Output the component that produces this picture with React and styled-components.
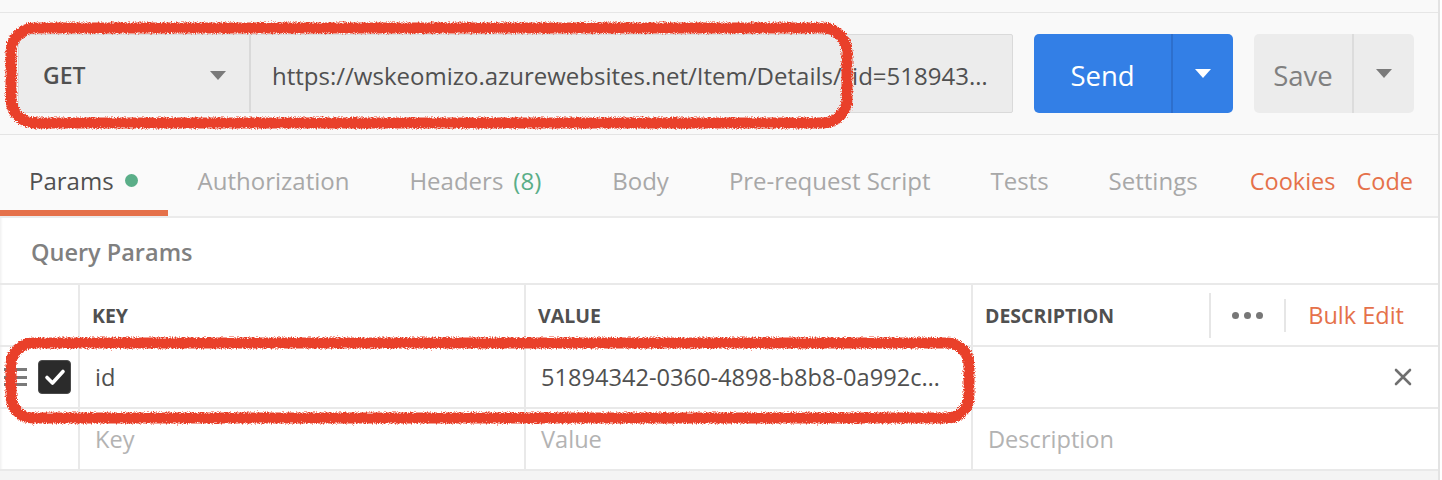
import styled, { createGlobalStyle } from "styled-components";

const GlobalStyle = createGlobalStyle`
  html, body {
    margin: 0;
    padding: 0;
    background: #ffffff;
  }
  body {
    font-family: "Open Sans", "Liberation Sans", sans-serif;
    color: #505050;
  }
  * {
    box-sizing: border-box;
  }
`;

const Page = styled.div`
  position: relative;
  width: 1442px;
  height: 480px;
  overflow: hidden;
  background: #ffffff;
`;

const Pane = styled.div`
  width: 1440px;
  height: 480px;
  display: flex;
  flex-direction: column;
  border-right: 2px solid #e3e3e3;
  box-shadow: inset 3px 0 3px -2px rgba(0, 0, 0, 0.08);
`;

const TopStrip = styled.div`
  height: 13px;
  flex: none;
  background: #f9f9f9;
  border-bottom: 1px solid #e6e6e6;
`;

const RequestBar = styled.div`
  flex: none;
  display: flex;
  align-items: stretch;
  gap: 21px;
  height: 122px;
  padding: 21px 24px 21px 18px;
  background: #f9f9f9;
  border-bottom: 1px solid #e4e4e4;
`;

const UrlGroup = styled.div`
  display: flex;
  width: 995px;
  background: #ececec;
  border: 1px solid #dadada;
  border-radius: 2px;
`;

const MethodSelect = styled.div`
  width: 232px;
  flex: none;
  display: flex;
  align-items: center;
  justify-content: space-between;
  padding: 3px 23px 0 24px;
  border-right: 2px solid #d9d9d9;
  font-size: 23px;
  font-weight: 600;
  color: #505050;
`;

const UrlInput = styled.div`
  flex: 1;
  min-width: 0;
  display: flex;
  align-items: center;
  padding: 3px 22px 0 21px;
  font-size: 24px;
  color: #505050;

  span {
    overflow: hidden;
    white-space: nowrap;
    text-overflow: ellipsis;
  }
`;

const Caret = styled.span`
  width: 0;
  height: 0;
  border-left: 8px solid transparent;
  border-right: 8px solid transparent;
  border-top: 9px solid ${(p) => p.$color || "#7a7a7a"};
`;

const SplitButton = styled.div`
  display: flex;
  width: ${(p) => p.$width}px;
  border-radius: 5px;
  background: ${(p) => (p.$primary ? "#337fe6" : "#ececec")};
  color: ${(p) => (p.$primary ? "#ffffff" : "#808080")};
  font-size: 27.5px;
  font-weight: 500;
`;

const ButtonLabel = styled.div`
  flex: 1;
  display: flex;
  align-items: center;
  justify-content: center;
  padding-top: 3px;
  border-right: 2px solid ${(p) => (p.$primary ? "#2d6fcd" : "#dcdcdc")};
`;

const ButtonCaret = styled.div`
  width: 60px;
  flex: none;
  display: flex;
  align-items: center;
  justify-content: center;
`;

const TabBar = styled.div`
  flex: none;
  display: flex;
  align-items: stretch;
  height: 83px;
  padding-right: 25px;
  background: #fafafa;
  border-bottom: 2px solid #ebebeb;
`;

const Tab = styled.div`
  display: flex;
  align-items: center;
  padding: 10px ${(p) => (p.$wide ? 41 : 30)}px 0 ${(p) => (p.$first ? 29 : 30)}px;
  font-size: 24px;
  color: ${(p) => (p.$active ? "#505050" : "#a8a8a8")};
  box-shadow: ${(p) => (p.$active ? "inset 0 -6px 0 #e5714a" : "none")};
`;

const Dot = styled.span`
  width: 13px;
  height: 13px;
  margin-left: 11px;
  border-radius: 50%;
  background: #5aae88;
`;

const Count = styled.span`
  margin-left: 10px;
  color: #5aae88;
`;

const TabLinks = styled.div`
  margin-left: auto;
  display: flex;
  align-items: center;
  gap: 21px;
  padding-top: 10px;
  font-size: 23.5px;
  color: #e5714a;
`;

const SectionTitle = styled.div`
  flex: none;
  height: 65px;
  display: flex;
  align-items: center;
  padding: 3px 0 0 31px;
  font-size: 23.5px;
  font-weight: 600;
  color: #808080;
`;

const Table = styled.div`
  flex: none;
  border-top: 2px solid #e9e9e9;
`;

const Row = styled.div`
  display: grid;
  grid-template-columns: 80px 446px 447px 1fr;
  height: 62px;
  border-bottom: 2px solid #e9e9e9;
`;

const Cell = styled.div`
  min-width: 0;
  display: flex;
  align-items: center;
  padding: 0 ${(p) => (p.$last ? 26 : 24)}px 0 ${(p) => (p.$head ? 12 : 15)}px;
  border-right: ${(p) => (p.$last ? "none" : "2px solid #e9e9e9")};
  font-size: ${(p) => (p.$head ? 19.5 : 23.6)}px;
  font-weight: ${(p) => (p.$head ? 700 : 400)};
  color: ${(p) => (p.$muted ? "#b3b3b3" : "#505050")};

  span {
    overflow: hidden;
    white-space: nowrap;
    text-overflow: ellipsis;
  }
`;

const HandleCell = styled.div`
  display: flex;
  align-items: center;
  gap: 11px;
  padding-left: 4px;
  border-right: 2px solid #e9e9e9;
`;

const Handle = styled.div`
  width: 23px;
  display: flex;
  flex-direction: column;
  gap: 4.5px;

  i {
    display: block;
    height: 3px;
    background: #7a7a7a;
  }
`;

const Checkbox = styled.div`
  width: 33px;
  height: 34px;
  border-radius: 4px;
  background: #2b2b2b;
  border: 1px solid #4a4a4a;
  display: flex;
  align-items: center;
  justify-content: center;
`;

const HeaderActions = styled.div`
  margin-left: auto;
  margin-right: 8px;
  display: flex;
  align-items: center;
  height: 100%;
`;

const Divider = styled.div`
  width: 2px;
  height: ${(p) => p.$h}px;
  background: #e6e6e6;
`;

const Dots = styled.div`
  display: flex;
  gap: 5px;
  padding: 0 21px;

  i {
    width: 7px;
    height: 7px;
    border-radius: 50%;
    background: #777777;
  }
`;

const BulkEdit = styled.span`
  padding-left: 22px;
  font-size: 23.5px;
  font-weight: 400;
  color: #e5714a;
`;

const CloseIcon = styled.svg`
  margin-left: auto;
  flex: none;
`;

const Filler = styled.div`
  flex: 1;
  background: #f4f4f4;
`;

const Marker = styled.svg`
  position: absolute;
  top: 0;
  left: 0;
  pointer-events: none;
`;

const url =
  "https://wskeomizo.azurewebsites.net/Item/Details/?id=51894342-0360-4898-b8b8-0a992c3e5d71";
const idValue = "51894342-0360-4898-b8b8-0a992c3e5d71";

const tabs = [
  "Authorization",
  "Headers",
  "Body",
  "Pre-request Script",
  "Tests",
  "Settings",
];

const App = () => {
  return (
    <Page>
      <GlobalStyle />
      <Pane>
        <TopStrip />
        <RequestBar>
          <UrlGroup>
            <MethodSelect>
              GET
              <Caret />
            </MethodSelect>
            <UrlInput>
              <span>{url}</span>
            </UrlInput>
          </UrlGroup>
          <SplitButton $primary $width={199}>
            <ButtonLabel $primary>Send</ButtonLabel>
            <ButtonCaret>
              <Caret $color="#ffffff" />
            </ButtonCaret>
          </SplitButton>
          <SplitButton $width={160}>
            <ButtonLabel>Save</ButtonLabel>
            <ButtonCaret>
              <Caret />
            </ButtonCaret>
          </SplitButton>
        </RequestBar>

        <TabBar>
          <Tab $active $first>
            Params
            <Dot />
          </Tab>
          {tabs.map((t) =>
            t === "Headers" ? (
              <Tab key={t} $wide>
                Headers<Count>(8)</Count>
              </Tab>
            ) : (
              <Tab key={t}>{t}</Tab>
            )
          )}
          <TabLinks>
            <span>Cookies</span>
            <span>Code</span>
          </TabLinks>
        </TabBar>

        <SectionTitle>Query Params</SectionTitle>

        <Table>
          <Row>
            <HandleCell />
            <Cell $head>KEY</Cell>
            <Cell $head>VALUE</Cell>
            <Cell $head $last>
              DESCRIPTION
              <HeaderActions>
                <Divider $h={45} />
                <Dots>
                  <i />
                  <i />
                  <i />
                </Dots>
                <Divider $h={33} />
                <BulkEdit>Bulk Edit</BulkEdit>
              </HeaderActions>
            </Cell>
          </Row>
          <Row>
            <HandleCell>
              <Handle>
                <i />
                <i />
                <i />
              </Handle>
              <Checkbox>
                <svg width="22" height="18" viewBox="0 0 22 18">
                  <path
                    d="M3 9.5 L8.5 15 L19 3.5"
                    fill="none"
                    stroke="#ffffff"
                    strokeWidth="3.6"
                    strokeLinecap="round"
                    strokeLinejoin="round"
                  />
                </svg>
              </Checkbox>
            </HandleCell>
            <Cell>
              <span>id</span>
            </Cell>
            <Cell>
              <span>{idValue}</span>
            </Cell>
            <Cell $last>
              <CloseIcon width="18" height="18" viewBox="0 0 18 18">
                <path
                  d="M2 2 L16 16 M16 2 L2 16"
                  stroke="#707070"
                  strokeWidth="2.6"
                  strokeLinecap="round"
                />
              </CloseIcon>
            </Cell>
          </Row>
          <Row>
            <HandleCell />
            <Cell $muted>Key</Cell>
            <Cell $muted>Value</Cell>
            <Cell $muted $last>
              Description
            </Cell>
          </Row>
        </Table>
        <Filler />
      </Pane>

      <Marker width="1442" height="480" viewBox="0 0 1442 480">
        <defs>
          <filter id="rough" x="-5%" y="-20%" width="110%" height="140%">
            <feTurbulence
              type="fractalNoise"
              baseFrequency="0.8"
              numOctaves="2"
              seed="3"
              result="noise"
            />
            <feDisplacementMap
              in="SourceGraphic"
              in2="noise"
              scale="5"
              xChannelSelector="R"
              yChannelSelector="G"
            />
          </filter>
        </defs>
        <g
          fill="none"
          stroke="#e9412b"
          strokeWidth="11"
          filter="url(#rough)"
        >
          <rect x="11" y="28" width="836" height="95" rx="24" />
          <rect x="11" y="343" width="958" height="75" rx="22" />
        </g>
      </Marker>
    </Page>
  );
};

export default App;
